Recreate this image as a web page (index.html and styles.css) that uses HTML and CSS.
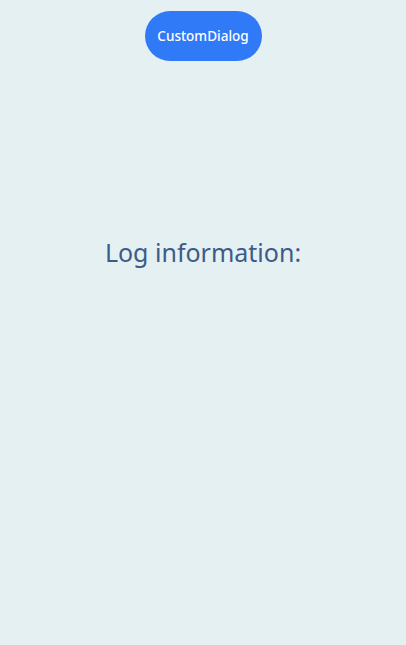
FILE: index.html
```html
<!DOCTYPE html>
<html>
<head>
<meta charset="utf-8">
<link rel="stylesheet" href="styles.css">
</head>
<body>
<div class="page">
  <div class="top">
    <button class="btn">CustomDialog</button>
  </div>
  <div class="log">Log information:</div>
</div>
</body>
</html>
```
FILE: styles.css
```css
html, body {
  margin: 0;
  padding: 0;
  background: #e5f0f3;
}
.page {
  width: 406px;
  height: 645px;
  display: flex;
  flex-direction: column;
  align-items: center;
  font-family: "Noto Sans", "Open Sans", sans-serif;
}
.top {
  padding-top: 11px;
}
.btn {
  width: 117px;
  height: 50px;
  border: none;
  border-radius: 25px;
  background: #317af7;
  color: #ffffff;
  font-family: "Noto Sans", sans-serif;
  font-size: 13.5px;
  font-weight: 500;
  padding: 0;
}
.log {
  margin-top: 175px;
  font-size: 25px;
  color: #3e5a88;
  line-height: 33px;
}
```
